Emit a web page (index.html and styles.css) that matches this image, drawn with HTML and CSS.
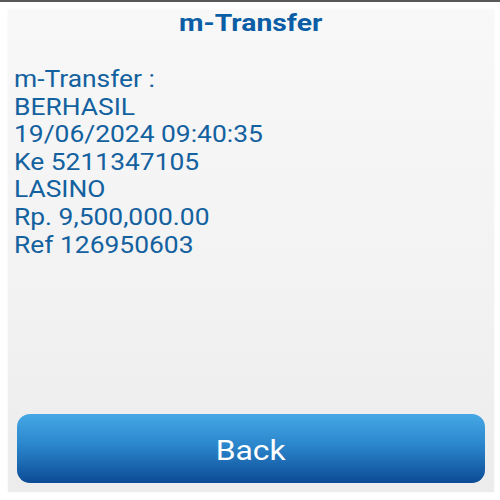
FILE: index.html
```html
<!DOCTYPE html>
<html>
<head>
<meta charset="utf-8">
<link rel="stylesheet" href="styles.css">
</head>
<body>
<div class="topbar"></div>
<div class="page">
  <div class="card">
    <h1 class="title"><span class="wide">m-Transfer</span></h1>
    <div class="message">
      <div class="line">m-Transfer :</div>
      <div class="line">BERHASIL</div>
      <div class="line">19/06/2024 09:40:35</div>
      <div class="line">Ke 5211347105</div>
      <div class="line">LASINO</div>
      <div class="line">Rp. 9,500,000.00</div>
      <div class="line">Ref 126950603</div>
    </div>
    <div class="spacer"></div>
    <button class="back"><span class="wide">Back</span></button>
  </div>
</div>
</body>
</html>
```

FILE: styles.css
```css
html, body {
  margin: 0;
  padding: 0;
  background: #ffffff;
  width: 500px;
  height: 500px;
  overflow: hidden;
  font-family: Roboto, "Liberation Sans", sans-serif;
}
.topbar {
  height: 2px;
  background: #5a5a5a;
}
.page {
  padding: 8px 6px 8px 8px;
  height: 498px;
  box-sizing: border-box;
}
.card {
  height: 100%;
  display: flex;
  flex-direction: column;
  background: linear-gradient(180deg, #f8f8f8 0%, #f2f2f2 60%, #ececec 100%);
  box-shadow: 0 0 2px rgba(0,0,0,0.06);
}
.wide {
  display: inline-block;
  transform: scaleX(1.18);
}
.title {
  margin: 0;
  text-align: center;
  font-size: 24px;
  font-weight: 700;
  color: #0b5ea6;
  line-height: 24px;
  padding-top: 1px;
}
.message {
  padding: 31px 0 0 6px;
  color: #13619f;
  font-size: 24px;
  line-height: 27.6px;
}
.line {
  width: fit-content;
  transform: scaleX(1.1);
  transform-origin: 0 50%;
}
.spacer {
  flex: 1;
}
.back {
  margin: 0 9px 9px 9px;
  height: 69px;
  border: none;
  border-radius: 13px;
  background: linear-gradient(180deg, #45a8e5 0%, #2b86cc 45%, #0c4b95 100%);
  color: #ffffff;
  font-family: Roboto, "Liberation Sans", sans-serif;
  font-size: 27px;
  padding: 4px 0 0 0;
}
```
